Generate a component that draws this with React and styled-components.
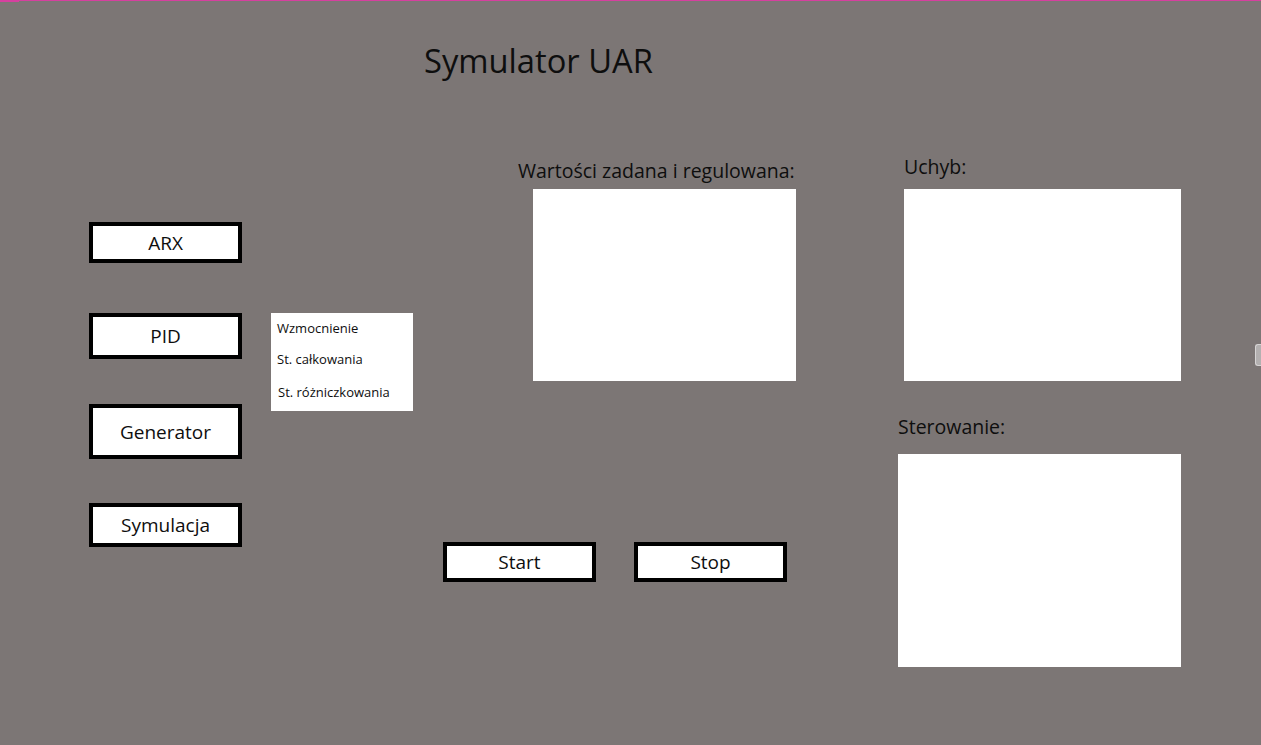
import React from 'react';
import styled, { createGlobalStyle } from 'styled-components';

const GlobalStyle = createGlobalStyle`
  html, body {
    margin: 0;
    padding: 0;
    background: #7c7675;
  }
  body {
    font-family: 'Open Sans', 'Noto Sans', sans-serif;
    color: #0e0e0e;
  }
`;

const Page = styled.div`
  position: relative;
  display: flex;
  flex-direction: column;
  width: 1261px;
  min-height: 745px;
  overflow: hidden;
  background: #7c7675;
`;

const TopLine = styled.div`
  position: relative;
  height: 1px;
  background: #d6409f;
  &::before {
    content: '';
    position: absolute;
    left: 0;
    top: 0;
    width: 19px;
    height: 2px;
    background: #d6409f;
  }
`;

const Title = styled.h1`
  margin: 38px 0 0 424px;
  font-size: 32.7px;
  font-weight: 400;
  line-height: 44px;
`;

const Workspace = styled.div`
  display: flex;
  align-items: flex-start;
  margin-top: 67px;
`;

const Menu = styled.div`
  display: flex;
  flex-direction: column;
  margin-left: 89px;
  padding-top: 72px;
`;

const FrameButton = styled.button`
  box-sizing: border-box;
  display: flex;
  align-items: center;
  justify-content: center;
  width: 153px;
  height: ${(props) => props.h}px;
  margin-top: ${(props) => props.mt || 0}px;
  padding: 0;
  background: #fff;
  border: 4px solid #000;
  font-family: inherit;
  font-size: 19px;
  color: #0e0e0e;
  cursor: pointer;
`;

const ParamPanel = styled.div`
  box-sizing: border-box;
  display: flex;
  flex-direction: column;
  width: 142px;
  height: 98px;
  margin: 163px 0 0 29px;
  padding: 6px 0 0 6px;
  background: #fff;
`;

const ParamItem = styled.div`
  margin-top: ${(props) => props.mt || 0}px;
  margin-left: ${(props) => props.ml || 0}px;
  font-size: 13px;
  line-height: 18px;
  white-space: nowrap;
`;

const CenterCol = styled.div`
  display: flex;
  flex-direction: column;
  width: 353px;
  margin-left: 30px;
`;

const RightCol = styled.div`
  display: flex;
  flex-direction: column;
  width: 283px;
  margin-left: 102px;
`;

const ChartLabel = styled.div`
  margin-top: ${(props) => props.mt}px;
  margin-left: ${(props) => props.ml || 0}px;
  font-size: 19.5px;
  line-height: 28px;
  white-space: nowrap;
`;

const ChartBox = styled.div`
  width: ${(props) => props.w}px;
  height: ${(props) => props.h}px;
  margin-top: ${(props) => props.mt}px;
  margin-left: ${(props) => props.ml || 0}px;
  background: #fff;
`;

const Controls = styled.div`
  display: flex;
  gap: 38px;
  margin-top: 161px;
`;

const ScrollHandle = styled.div`
  position: absolute;
  right: 0;
  top: 344px;
  width: 5px;
  height: 20px;
  background: #b3b0b0;
  border: 1px solid #d6d4d4;
  border-right: none;
  border-radius: 3px 0 0 3px;
`;

const App = () => {
  return (
    <>
      <GlobalStyle />
      <Page>
        <TopLine />
        <Title>Symulator UAR</Title>
        <Workspace>
          <Menu>
            <FrameButton h={41}>ARX</FrameButton>
            <FrameButton h={46} mt={50}>PID</FrameButton>
            <FrameButton h={55} mt={45}>Generator</FrameButton>
            <FrameButton h={44} mt={44}>Symulacja</FrameButton>
          </Menu>
          <ParamPanel>
            <ParamItem>Wzmocnienie</ParamItem>
            <ParamItem mt={13}>St. całkowania</ParamItem>
            <ParamItem mt={15} ml={1}>St. różniczkowania</ParamItem>
          </ParamPanel>
          <CenterCol>
            <ChartLabel mt={7} ml={75}>Wartości zadana i regulowana:</ChartLabel>
            <ChartBox w={263} h={192} mt={4} ml={90} />
            <Controls>
              <FrameButton h={40}>Start</FrameButton>
              <FrameButton h={40}>Stop</FrameButton>
            </Controls>
          </CenterCol>
          <RightCol>
            <ChartLabel mt={3} ml={6}>Uchyb:</ChartLabel>
            <ChartBox w={277} h={192} mt={8} ml={6} />
            <ChartLabel mt={32}>Sterowanie:</ChartLabel>
            <ChartBox w={283} h={213} mt={13} />
          </RightCol>
        </Workspace>
        <ScrollHandle />
      </Page>
    </>
  );
};

export default App;
